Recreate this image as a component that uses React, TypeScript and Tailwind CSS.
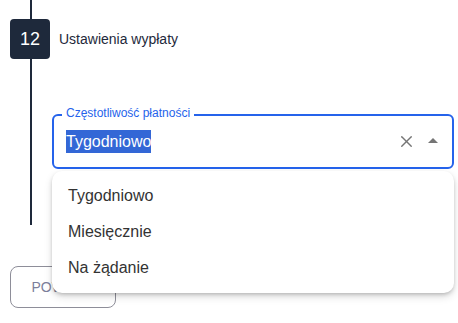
import { X } from 'lucide-react';

const OPTIONS = ['Tygodniowo', 'Miesięcznie', 'Na żądanie'];

export default function App() {
  return (
    <div className="relative h-[323px] w-[458px] overflow-hidden bg-white pl-[10px] font-['Liberation_Sans',Arial,sans-serif]">
      {/* Line above step badge */}
      <div className="ml-[20px] h-[19px] w-[2px] bg-[#1e293b]" />

      {/* Step header */}
      <div className="flex items-center">
        <div className="flex h-[40px] w-[40px] items-center justify-center rounded-[4px] bg-[#1e293b] text-[18px] text-white">
          12
        </div>
        <span className="ml-[9px] text-[14px] text-[#1e293b]">Ustawienia wypłaty</span>
      </div>

      {/* Step body */}
      <div className="flex">
        <div className="ml-[20px] h-[166px] w-[2px] shrink-0 bg-[#1e293b]" />
        <div className="ml-[20px] pt-[55px]">
          <div className="relative w-[402px]">
            <div className="flex h-[55px] items-center rounded-[6px] border-2 border-[#2563eb] pl-[12px] pr-[14px]">
              <span className="bg-[#3367d6] text-[16px] leading-[23px] text-white">Tygodniowo</span>
              <div className="ml-auto flex items-center gap-[12px] text-[#757575]">
                <X size={19} strokeWidth={1.7} />
                <svg width="10" height="5" viewBox="0 0 10 5" className="mt-[-2px]">
                  <path d="M0 5 L5 0 L10 5 Z" fill="#757575" />
                </svg>
              </div>
            </div>
            <span className="absolute left-[10px] top-[-8px] bg-white px-[4px] text-[12px] leading-[14px] text-[#2563eb]">
              Częstotliwość płatności
            </span>

            {/* Dropdown */}
            <div className="absolute left-0 right-0 top-full z-10 mt-[2px] rounded-[10px] bg-white py-[7px] shadow-[0_2px_4px_-1px_rgba(0,0,0,0.25),0_4px_8px_0_rgba(0,0,0,0.12)]">
              {OPTIONS.map(o => (
                <div key={o} className="flex h-[36px] items-center px-[16px] text-[16px] text-[#333]">
                  {o}
                </div>
              ))}
            </div>
          </div>
        </div>
      </div>

      {/* Back button */}
      <button className="mt-[41px] h-[42px] w-[106px] rounded-[8px] border border-[#8e8e99] text-[14px] text-[#7c7f9b]">
        POWRÓT
      </button>
    </div>
  );
}
